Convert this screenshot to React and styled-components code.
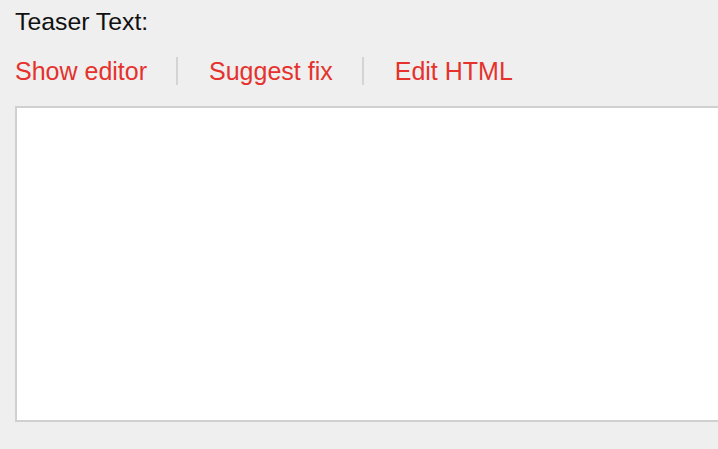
import styled, { createGlobalStyle } from "styled-components";

const GlobalStyle = createGlobalStyle`
  html, body {
    margin: 0;
    padding: 0;
    background: #efefef;
    overflow: hidden;
  }
  body {
    font-family: "Liberation Sans", Arial, sans-serif;
  }
`;

const Field = styled.div`
  padding: 8px 0 0 15px;
`;

const Label = styled.div`
  font-size: 24.8px;
  line-height: 28px;
  color: #111;
`;

const Actions = styled.div`
  display: flex;
  align-items: center;
  margin-top: 20px;
  height: 30px;
`;

const ActionLink = styled.a`
  font-size: 25px;
  line-height: 30px;
  color: #e5322d;
  text-decoration: none;
  cursor: pointer;
`;

const Separator = styled.span`
  width: 2px;
  height: 28px;
  background: #d4d4d4;
  margin: 0 31px 0 29px;
`;

const Editor = styled.div`
  margin-top: 20px;
  height: 312px;
  background: #fff;
  border: 2px solid #d0d0d0;
  border-right: none;
`;

export default function App() {
  return (
    <>
      <GlobalStyle />
      <Field>
        <Label>Teaser Text:</Label>
        <Actions>
          <ActionLink>Show editor</ActionLink>
          <Separator />
          <ActionLink>Suggest fix</ActionLink>
          <Separator />
          <ActionLink>Edit HTML</ActionLink>
        </Actions>
        <Editor />
      </Field>
    </>
  );
}
